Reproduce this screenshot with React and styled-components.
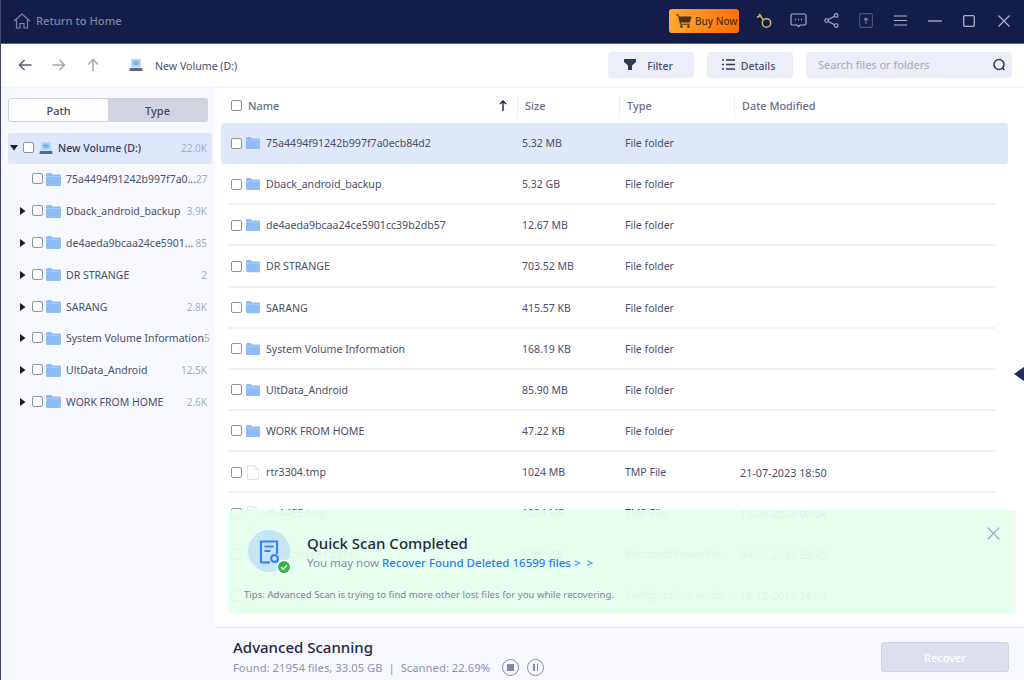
import React from "react";
import styled, { createGlobalStyle } from "styled-components";

const Global = createGlobalStyle`
  html, body { margin: 0; padding: 0; background: #fff; }
  * { box-sizing: border-box; }
  body { font-family: "Noto Sans", "Liberation Sans", sans-serif; }
`;

const Win = styled.div`
  width: 1024px; height: 680px; display: flex; flex-direction: column; overflow: hidden;
  position: relative; background: #fff; border-left: 1px solid #3d4468;
`;
const TitleBar = styled.header`
  height: 44px; flex: none; background: #141d4a; border-bottom: 1px solid #5a6080;
  display: flex; align-items: center; padding: 0 14px 2px 12px;
`;
const HomeLink = styled.div`
  display: flex; align-items: center; gap: 5px; color: #7d83a3; font-size: 11.2px; font-weight: 500; flex: 1;
`;
const BuyBtn = styled.button`
  width: 70px; height: 24px; border: 0; border-radius: 3px; padding: 0 0 0 7px; display: flex; align-items: center; gap: 3px; white-space: nowrap;
  background: linear-gradient(100deg, #ffad2e, #ff6a05); color: #4b3312; font: 500 10px "Noto Sans", sans-serif; margin-right: 17px;
`;
const TitleIcon = styled.span`
  display: flex; width: ${p => p.$w}px; margin-right: ${p => p.$m}px; justify-content: center;
`;
const Toolbar = styled.div`
  height: 44px; flex: none; display: flex; align-items: center; padding: 0 12px 1px 17px; border-bottom: 2px solid #f3f5fa; color: #555a78;
`;
const NavIcons = styled.div` display: flex; gap: 20px; align-items: center; margin-right: 29px; `;
const Crumb = styled.div` display: flex; align-items: center; gap: 12px; font-size: 10.6px; color: #4b4f6a; flex: 1; `;
const ToolLabel = styled.span` padding-top: 2px; `;
const ToolBtn = styled.div`
  width: 86px; height: 26px; border-radius: 4px; background: #eceef7; margin-right: 13px; display: flex; align-items: center; justify-content: center;
  gap: ${p => p.$gap}px; font-size: 10.5px; font-weight: 500; color: #4b4f6a; padding-right: ${p => p.$pr}px;
`;
const Search = styled.div`
  width: 206px; height: 26px; border-radius: 4px; background: #eceef7; display: flex; align-items: center; justify-content: space-between;
  padding: 0 6px 0 12px; font-size: 11px; color: #a7aabd;
`;
const Body = styled.div` flex: 1; display: flex; min-height: 0; `;
const Sidebar = styled.aside` width: 214px; flex: none; background: #f8f9fe; padding: 10px 3px 0 7px; `;
const Tabs = styled.div`
  width: 200px; height: 24px; background: #d1d4df; border-radius: 3px; display: flex; padding: 1px; margin-bottom: 11px;
`;
const Tab = styled.div`
  flex: 1; border-radius: 2px; display: flex; align-items: center; justify-content: center; font-size: 11px; font-weight: 500; color: #44485f;
  background: ${p => p.$on ? "#fff" : "transparent"};
`;
const TreeRow = styled.div`
  height: ${p => p.$top ? 30.5 : 31.8}px; display: flex; align-items: center; border-radius: 3px; padding: 0 5px 0 0;
  background: ${p => p.$top ? "#dfe8fb" : "transparent"}; font-size: 10.5px; color: #4b4f6a;
`;
const Caret = styled.span` width: 11px; display: flex; justify-content: center; flex: none; margin-left: ${p => p.$ml}px; `;
const Check = styled.span`
  width: 11px; height: 11px; flex: none; border: 1px solid #8f919d; border-radius: 2px; background: #fff;
`;
const TreeCheck = styled(Check)` margin: 0 ${p => p.$mr}px 1px 4px; `;
const TreeName = styled.span`
  flex: 1; margin-left: 5px; white-space: nowrap; font-weight: ${p => p.$top ? 500 : 400}; color: ${p => p.$top ? "#33375a" : "#4b4f6a"};
`;
const Count = styled.span` font-size: 10px; color: #a9abca; white-space: nowrap; `;
const Main = styled.main` flex: 1; display: flex; flex-direction: column; min-width: 0; position: relative; `;
const TableArea = styled.div` flex: 1; min-height: 0; overflow: hidden; padding: 0 16px 0 6px; `;
const Head = styled.div`
  height: 35px; display: grid; grid-template-columns: 296px 102px 115px 1fr; align-items: center; font-size: 10.9px; font-weight: 500; color: #6a6e87;
`;
const HeadCell = styled.div`
  display: flex; align-items: center; height: 24px; padding-left: ${p => p.$pl || 7}px; border-left: ${p => p.$first ? 0 : "1px solid #eef0f6"};
  gap: 6px; position: relative;
`;
const SortMark = styled.span` position: absolute; right: 10px; top: 6px; display: flex; `;
const Row = styled.div`
  height: 41.14px; display: grid; grid-template-columns: 296px 102px 115px 1fr; align-items: center; font-size: 10.5px; color: #4b4f6a;
  border-radius: 3px; position: relative; background: ${p => p.$sel ? "#dfe8fb" : "transparent"}; padding-bottom: 1px;
  &::after {
    content: ""; position: absolute; left: 7px; right: 13px; bottom: 0; height: 2px; background: ${p => p.$sel || p.$nosep ? "transparent" : "#f0f1f8"};
  }
`;
const NameCell = styled.div` display: flex; align-items: center; padding-left: 10px; font-size: 10.6px; white-space: nowrap; `;
const Cell = styled.div` padding-left: ${p => p.$pl}px; white-space: nowrap; font-size: ${p => p.$fs || 10.5}px; `;
const IconSlot = styled.span` display: flex; width: 16px; margin: 0 4px 0 3px; justify-content: center; `;
const RowText = styled.span` margin-left: 1px; `;
const Footer = styled.footer`
  height: 53px; flex: none; background: #f8f9fe; border-top: 1px solid #e6e9f2; display: flex; justify-content: space-between; padding: 12px 15px 0 18px;
`;
const FootTitle = styled.div` font-size: 15px; font-weight: 500; color: #23263f; line-height: 15px; `;
const FootInfo = styled.div` display: flex; align-items: center; gap: 8px; font-size: 11.3px; color: #9193b8; margin-top: 3px; height: 18px; `;
const FootStats = styled.span` margin-right: 4px; `;
const RoundBtn = styled.span`
  width: 17px; height: 17px; border-radius: 50%; border: 1px solid #8487ad; display: flex; align-items: center; justify-content: center; gap: 2px;
`;
const StopMark = styled.i` width: 7px; height: 7px; background: #8487ad; display: block; `;
const PauseMark = styled.i` width: 1.5px; height: 7px; background: #8487ad; display: block; `;
const RecoverBtn = styled.button`
  width: 128px; height: 30px; margin-top: 2px; border: 1px solid #cfd4e6; border-radius: 3px; background: #dcdfec; color: #fff; font: 500 11px "Noto Sans", sans-serif;
`;
const Toast = styled.div`
  position: absolute; left: 13px; top: 422px; width: 788px; height: 104px; background: rgba(230, 255, 238, 0.94); border-radius: 3px;
  padding: 20px 0 0 19px;
`;
const ToastTop = styled.div` display: flex; align-items: flex-start; gap: 16px; `;
const ToastBadge = styled.div` position: relative; width: 44px; height: 44px; flex: none; `;
const ToastTitle = styled.div` font-size: 15px; font-weight: 500; color: #23263f; line-height: 20px; margin-top: 3px; `;
const ToastLine = styled.div` font-size: 11.52px; color: #8a8fa8; line-height: 16px; margin-top: 2px; `;
const ToastLink = styled.span` color: #2f7bf2; font-weight: 500; `;
const ToastTips = styled.div` font-size: 9.65px; color: #7f8598; margin: 14px 0 0 -3px; white-space: nowrap; `;
const ToastClose = styled.span` position: absolute; right: 16px; top: 17px; display: flex; `;
const SideHandle = styled.span`
  position: absolute; right: 0; top: 279px; width: 0; height: 0; border-style: solid; border-width: 7px 10px 7px 0; border-color: transparent #232c5a transparent transparent;
`;

const Folder = ({ w = 15 }) => (
  <svg width={w} height={w * 0.87} viewBox="0 0 15 13" style={{ flex: "none" }}><path d="M0 1.5C0 .7.6 0 1.4 0H5l1.6 1.6H13.6c.8 0 1.4.6 1.4 1.4v8.6c0 .8-.6 1.4-1.4 1.4H1.4C.6 13 0 12.4 0 11.6z" fill="#8fbbf7" /><path d="M0 3h15v1H0z" fill="#a8ccfa" /></svg>
);
const SmallFolder = () => <Folder w={14} />;
const Drive = ({ s = 14 }) => (
  <svg width={s} height={s} viewBox="0 0 14 14" style={{ flex: "none" }}><path d="M2 1h10v8.5H2z" fill="#b5d8f7" /><ellipse cx="7" cy="5" rx="3.2" ry="2.4" fill="#7fb3f0" /><path d="M1 10h12l.6 3H.4z" fill="#5f6480" /></svg>
);
const DocIcon = () => (
  <svg width="12" height="15" viewBox="0 0 12 15" fill="none"><path d="M.5.5h7.2l3.8 3.8v10.2H.5z" stroke="#e2e3ea" fill="#fdfdff" /><path d="M7.5.5v4h4" stroke="#e2e3ea" /></svg>
);
const PptIcon = () => (
  <svg width="13" height="15" viewBox="0 0 13 15"><rect x=".5" y=".5" width="12" height="14" rx="1" fill="#f5b8a0" /><rect x="3" y="4" width="7" height="7" fill="#e88d6a" /></svg>
);
const NavArrow = ({ d, c }) => (
  <svg width="14" height="14" viewBox="0 0 14 14" fill="none" stroke={c} strokeWidth="1.5"><path d={d} /></svg>
);
const RightTri = () => <svg width="6" height="8" viewBox="0 0 6 8"><path d="M0 0l5.5 4L0 8z" fill="#1c1e2c" /></svg>;
const DownTri = () => <svg width="8" height="6" viewBox="0 0 8 6"><path d="M0 0h8L4 5.5z" fill="#1c1e2c" /></svg>;

const tree = [
  ["75a4494f91242b997f7a0...", "27", false],
  ["Dback_android_backup", "3.9K", true],
  ["de4aeda9bcaa24ce5901...", "85", true],
  ["DR STRANGE", "2", true],
  ["SARANG", "2.8K", true],
  ["System Volume Information", "5", true],
  ["UltData_Android", "12.5K", true],
  ["WORK FROM HOME", "2.6K", true],
];
const rows = [
  ["75a4494f91242b997f7a0ecb84d2", "5.32 MB", "File folder", "", "f"],
  ["Dback_android_backup", "5.32 GB", "File folder", "", "f"],
  ["de4aeda9bcaa24ce5901cc39b2db57", "12.67 MB", "File folder", "", "f"],
  ["DR STRANGE", "703.52 MB", "File folder", "", "f"],
  ["SARANG", "415.57 KB", "File folder", "", "f"],
  ["System Volume Information", "168.19 KB", "File folder", "", "f"],
  ["UltData_Android", "85.90 MB", "File folder", "", "f"],
  ["WORK FROM HOME", "47.22 KB", "File folder", "", "f"],
  ["rtr3304.tmp", "1024 MB", "TMP File", "21-07-2023 18:50", "d"],
  ["rtrA4EE.tmp", "1024 MB", "TMP File", "10-03-2024 00:04", "d"],
  ["21-22 vivek f.pptx", "5.88 MB", "Microsoft PowerPoi...", "04-08-2022 23:45", "p"],
  ["desktop.ini", "", "Configuration settin...", "16-12-2019 14:08", "d"],
];

export default function App() {
  return (
    <Win>
      <Global />
      <TitleBar>
        <HomeLink>
          <svg width="18" height="16" viewBox="0 0 18 16" fill="none" stroke="#7d83a3" strokeWidth="1.2"><path d="M1 8L9 1l8 7M3.5 6.5V15h3.5v-4.5h4V15h3.5V6.5" /></svg>
          Return to Home
        </HomeLink>
        <BuyBtn>
          <svg width="16" height="14" viewBox="0 0 16 14"><path d="M0 .5h2.6l.6 2H15.5l-1.6 6H4.6l.3 1.2h9v1.1H4L2 1.6H0z" fill="#4b3312" /><circle cx="5.5" cy="12.6" r="1.3" fill="#4b3312" /><circle cx="12.5" cy="12.6" r="1.3" fill="#4b3312" /></svg>
          Buy Now
        </BuyBtn>
        <TitleIcon $w={17} $m={17}>
          <svg width="17" height="16" viewBox="0 0 17 16" fill="none" stroke="#d8b56a" strokeWidth="1.5"><circle cx="10.5" cy="10" r="4.2" /><path d="M7.5 7L3 1M1 4.5l4-2.5" /></svg>
        </TitleIcon>
        <TitleIcon $w={17} $m={17}>
          <svg width="17" height="15" viewBox="0 0 17 15" fill="none" stroke="#aeb2c8" strokeWidth="1.1"><path d="M2.5 1h12A1.5 1.5 0 0 1 16 2.5v8a1.5 1.5 0 0 1-1.5 1.5H10l-1.5 1.6L7 12H2.5A1.5 1.5 0 0 1 1 10.5v-8A1.5 1.5 0 0 1 2.5 1z" /><path d="M5 6.5h1M8 6.5h1M11 6.5h1" strokeWidth="1.4" /></svg>
        </TitleIcon>
        <TitleIcon $w={15} $m={20}>
          <svg width="15" height="15" viewBox="0 0 15 15" fill="none" stroke="#aeb2c8" strokeWidth="1.1"><circle cx="2.6" cy="7.5" r="1.8" /><circle cx="12.2" cy="2.4" r="1.8" /><circle cx="12.2" cy="12.6" r="1.8" /><path d="M4.2 6.6l6.4-3.4M4.2 8.4l6.4 3.4" /></svg>
        </TitleIcon>
        <TitleIcon $w={14} $m={21}>
          <svg width="14" height="15" viewBox="0 0 14 15" fill="none" stroke="#4d5378" strokeWidth="1.1"><rect x=".6" y=".6" width="12.8" height="13.8" rx="2" /><path d="M7 11V5M5 7l2-2 2 2" stroke="#7c81a0" /></svg>
        </TitleIcon>
        <TitleIcon $w={13} $m={21}>
          <svg width="13" height="11" viewBox="0 0 13 11" stroke="#aeb2c8" strokeWidth="1.2"><path d="M0 1h13M0 5.5h13M0 10h13" /></svg>
        </TitleIcon>
        <TitleIcon $w={14} $m={21}>
          <svg width="14" height="2" viewBox="0 0 14 2" stroke="#aeb2c8" strokeWidth="1.3"><path d="M0 1h14" /></svg>
        </TitleIcon>
        <TitleIcon $w={12} $m={23}>
          <svg width="12" height="12" viewBox="0 0 12 12" fill="none" stroke="#aeb2c8" strokeWidth="1.3"><rect x=".7" y=".7" width="10.6" height="10.6" rx="1" /></svg>
        </TitleIcon>
        <TitleIcon $w={12} $m={0}>
          <svg width="12" height="12" viewBox="0 0 12 12" stroke="#aeb2c8" strokeWidth="1.2"><path d="M.5.5l11 11M11.5.5l-11 11" /></svg>
        </TitleIcon>
      </TitleBar>
      <Toolbar>
        <NavIcons>
          <NavArrow c="#5c5f78" d="M13.5 7H1.5M6.5 2l-5 5 5 5" />
          <NavArrow c="#a3a6b8" d="M.5 7h12M7.5 2l5 5-5 5" />
          <NavArrow c="#a3a6b8" d="M7 13V1.5M2 6.5l5-5 5 5" />
        </NavIcons>
        <Crumb><Drive s={14} /><ToolLabel>New Volume (D:)</ToolLabel></Crumb>
        <ToolBtn $gap={11} $pr={5}>
          <svg width="12" height="11" viewBox="0 0 12 11"><path d="M0 0h12v3L8 6.5V11H4V6.5L0 3z" fill="#33375a" /></svg>
          <ToolLabel>Filter</ToolLabel>
        </ToolBtn>
        <ToolBtn $gap={6} $pr={3}>
          <svg width="13" height="11" viewBox="0 0 13 11" stroke="#33375a" strokeWidth="1.3"><path d="M0 1h2M4 1h9M0 5.5h2M4 5.5h9M0 10h2M4 10h9" /></svg>
          <ToolLabel>Details</ToolLabel>
        </ToolBtn>
        <Search>
          Search files or folders
          <svg width="14" height="14" viewBox="0 0 14 14" fill="none" stroke="#33375a" strokeWidth="1.6"><circle cx="7" cy="6.5" r="5" /><path d="M10.5 10l2 2" /></svg>
        </Search>
      </Toolbar>
      <Body>
        <Sidebar>
          <Tabs><Tab $on>Path</Tab><Tab>Type</Tab></Tabs>
          <TreeRow $top>
            <Caret $ml={0}><DownTri /></Caret>
            <TreeCheck $mr={5} />
            <Drive s={14} />
            <TreeName $top>New Volume (D:)</TreeName>
            <Count>22.0K</Count>
          </TreeRow>
          {tree.map(([n, c, caret]) => (
            <TreeRow key={n}>
              <Caret $ml={9}>{caret && <RightTri />}</Caret>
              <TreeCheck $mr={3} />
              <Folder />
              <TreeName>{n}</TreeName>
              <Count>{c}</Count>
            </TreeRow>
          ))}
        </Sidebar>
        <Main>
          <TableArea>
            <Head>
              <HeadCell $first $pl={10}><Check />Name<SortMark><svg width="8" height="11" viewBox="0 0 8 11" fill="none" stroke="#1c2040" strokeWidth="1.4"><path d="M4 11V1M1 4l3-3 3 3" /></svg></SortMark></HeadCell>
              <HeadCell>Size</HeadCell>
              <HeadCell>Type</HeadCell>
              <HeadCell>Date Modified</HeadCell>
            </Head>
            {rows.map((r, i) => (
              <Row key={r[0]} $sel={i === 0} $nosep={i === 11}>
                <NameCell>
                  <Check />
                  <IconSlot>{r[4] === "f" ? <SmallFolder /> : r[4] === "p" ? <PptIcon /> : <DocIcon />}</IconSlot>
                  <RowText>{r[0]}</RowText>
                </NameCell>
                <Cell $pl={5}>{r[1]}</Cell>
                <Cell $pl={6}>{r[2]}</Cell>
                <Cell $pl={6} $fs={10.8}>{r[3]}</Cell>
              </Row>
            ))}
          </TableArea>
          <Footer>
            <div>
              <FootTitle>Advanced Scanning</FootTitle>
              <FootInfo>
                <FootStats>Found: 21954 files, 33.05 GB&nbsp; |&nbsp; Scanned: 22.69%</FootStats>
                <RoundBtn><StopMark /></RoundBtn>
                <RoundBtn><PauseMark /><PauseMark /></RoundBtn>
              </FootInfo>
            </div>
            <RecoverBtn>Recover</RecoverBtn>
          </Footer>
          <Toast>
            <ToastTop>
              <ToastBadge>
                <svg width="46" height="46" viewBox="0 0 46 46">
                  <circle cx="22" cy="21" r="21" fill="#c5e6f4" />
                  <path d="M14 33V11.5h16V24" fill="none" stroke="#3b82f6" strokeWidth="2.2" />
                  <path d="M14 32.5h9" fill="none" stroke="#3b82f6" strokeWidth="2.2" />
                  <path d="M17.5 16.5h9M17.5 21h6" stroke="#3b82f6" strokeWidth="1.8" />
                  <circle cx="27.5" cy="28.5" r="3.4" fill="none" stroke="#3b82f6" strokeWidth="2.2" />
                  <path d="M30 31l2.2 2.2" stroke="#3b82f6" strokeWidth="1.8" />
                  <circle cx="37" cy="37" r="7.6" fill="#fff" />
                  <circle cx="37" cy="37" r="6" fill="#37b24d" />
                  <path d="M34 37l2.2 2.2 3.8-4" fill="none" stroke="#fff" strokeWidth="1.4" />
                </svg>
              </ToastBadge>
              <div>
                <ToastTitle>Quick Scan Completed</ToastTitle>
                <ToastLine>You may now <ToastLink>Recover Found Deleted 16599 files &gt; &nbsp;&gt;</ToastLink></ToastLine>
              </div>
            </ToastTop>
            <ToastTips>Tips: Advanced Scan is trying to find more other lost files for you while recovering.</ToastTips>
            <ToastClose>
              <svg width="13" height="13" viewBox="0 0 13 13" stroke="#9a9fc0" strokeWidth="1.2"><path d="M.7.7l11.6 11.6M12.3.7L.7 12.3" /></svg>
            </ToastClose>
          </Toast>
          <SideHandle />
        </Main>
      </Body>
    </Win>
  );
}
